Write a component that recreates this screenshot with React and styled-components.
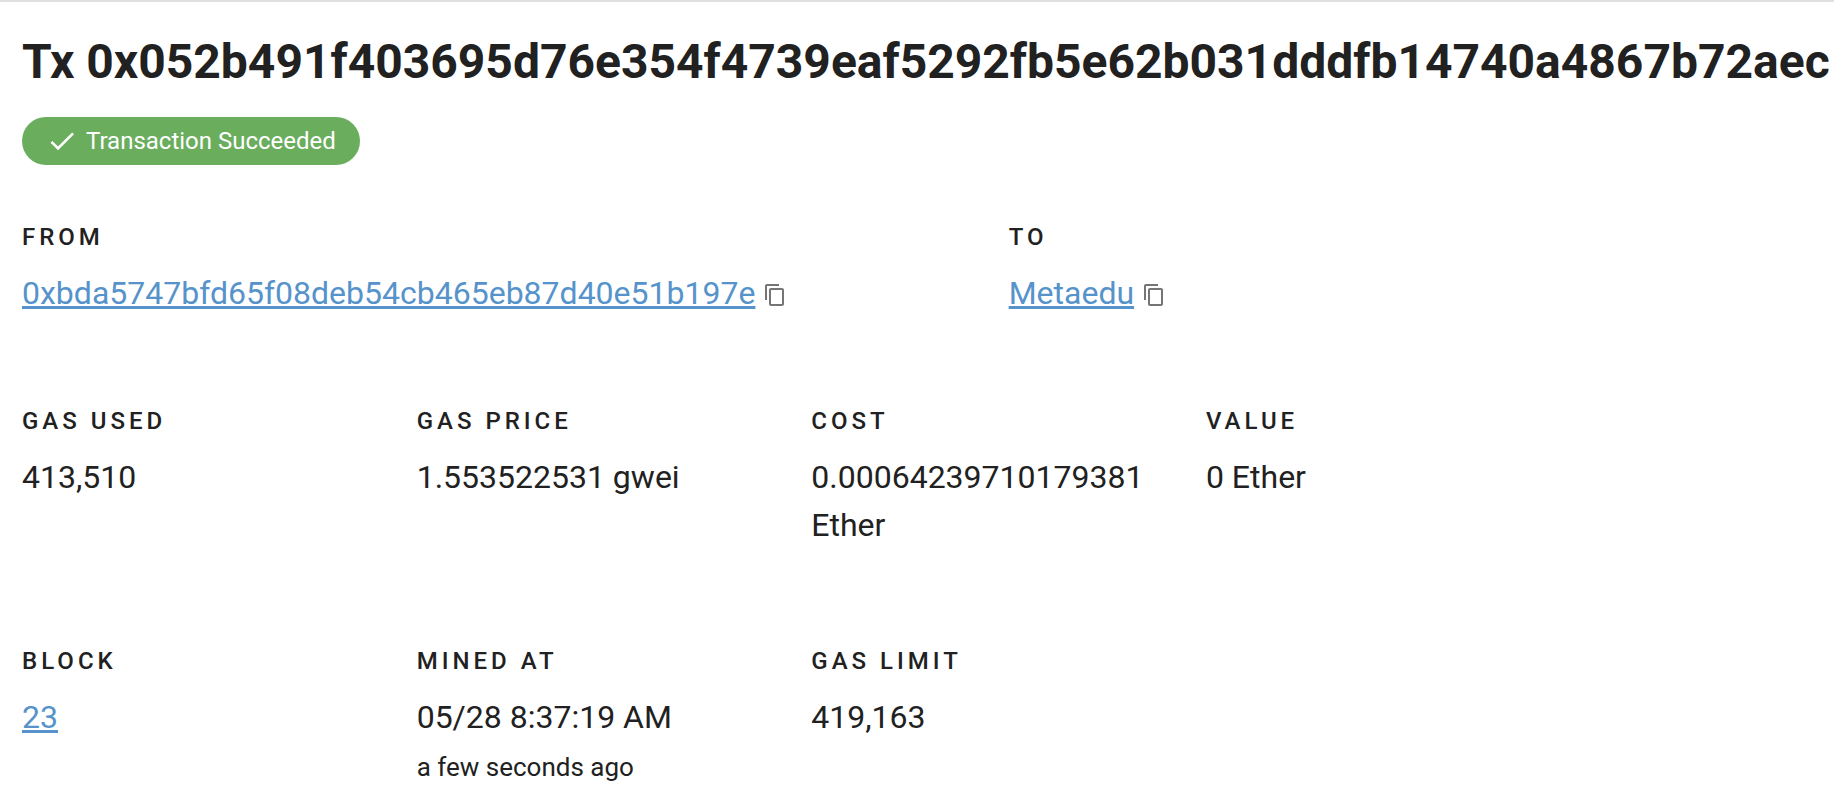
import React from "react";
import styled, { createGlobalStyle } from "styled-components";

const GlobalStyle = createGlobalStyle`
  *, *::before, *::after { box-sizing: border-box; }
  body {
    margin: 0;
    background: #fff;
    color: #212121;
    font-family: Roboto, "Liberation Sans", sans-serif;
    font-size: 32px;
    line-height: 48px;
  }
`;

const Page = styled.main`
  border-top: 2px solid #e0e0e0;
  padding: 32px 0 0 22px;
  overflow: hidden;
`;

const Title = styled.h1`
  margin: 0 0 27px;
  font-size: 48px;
  font-weight: 700;
  line-height: 56px;
  white-space: nowrap;
`;

const StatusChip = styled.div`
  display: inline-flex;
  align-items: center;
  gap: 8px;
  height: 48px;
  padding: 0 24px;
  border-radius: 24px;
  background: #69ad5d;
  color: #fff;
  font-size: 24px;
  vertical-align: top;
`;

const Icon = styled.svg`
  display: block;
  flex: none;
  width: ${(p) => p.$size}px;
  height: ${(p) => p.$size}px;
  fill: currentColor;
`;

const Details = styled.dl`
  display: flex;
  margin: ${(p) => p.$space}px 0 0;
`;

const Field = styled.div`
  flex: 0 0 ${(p) => (p.$wide ? "54.45%" : "21.78%")};
`;

const Label = styled.dt`
  margin-bottom: 16px;
  font-size: 24px;
  font-weight: 500;
  line-height: 32px;
  letter-spacing: 4px;
  text-transform: uppercase;
`;

const Value = styled.dd`
  margin: 0;
`;

const AddressLine = styled.div`
  display: flex;
  align-items: center;
  gap: 8px;
`;

const Link = styled.a`
  color: #5693cb;
  text-decoration: underline;
  text-decoration-thickness: 3px;
  text-decoration-skip-ink: none;
`;

const CopyButton = styled.button`
  padding: 4px 0 0;
  border: 0;
  background: none;
  color: #757575;
  cursor: pointer;
`;

const Note = styled.div`
  margin-top: 2px;
  font-size: 26px;
`;

function Address({ children }) {
  return (
    <AddressLine>
      <Link href="#address">{children}</Link>
      <CopyButton type="button" aria-label="Copy address">
        <Icon $size={24} viewBox="0 0 24 24" aria-hidden="true">
          <path d="M16 1H4c-1.1 0-2 .9-2 2v14h2V3h12V1zm3 4H8c-1.1 0-2 .9-2 2v14c0 1.1.9 2 2 2h11c1.1 0 2-.9 2-2V7c0-1.1-.9-2-2-2zm0 16H8V7h11v14z" />
        </Icon>
      </CopyButton>
    </AddressLine>
  );
}

function Detail({ label, wide, children }) {
  return (
    <Field $wide={wide}>
      <Label>{label}</Label>
      <Value>{children}</Value>
    </Field>
  );
}

export default function App() {
  return (
    <>
      <GlobalStyle />
      <Page>
        <Title>Tx 0x052b491f403695d76e354f4739eaf5292fb5e62b031dddfb14740a4867b72aec</Title>
        <StatusChip>
          <Icon $size={32} viewBox="0 0 24 24" aria-hidden="true">
            <path d="M9 16.2 4.8 12l-1.4 1.4L9 19 21 7l-1.4-1.4L9 16.2z" />
          </Icon>
          Transaction Succeeded
        </StatusChip>
        <Details $space={56}>
          <Detail label="From" wide>
            <Address>0xbda5747bfd65f08deb54cb465eb87d40e51b197e</Address>
          </Detail>
          <Detail label="To" wide>
            <Address>Metaedu</Address>
          </Detail>
        </Details>
        <Details $space={88}>
          <Detail label="Gas used">413,510</Detail>
          <Detail label="Gas price">1.553522531 gwei</Detail>
          <Detail label="Cost">0.00064239710179381 Ether</Detail>
          <Detail label="Value">0 Ether</Detail>
        </Details>
        <Details $space={96}>
          <Detail label="Block">
            <Link href="#block">23</Link>
          </Detail>
          <Detail label="Mined at">
            05/28 8:37:19 AM
            <Note>a few seconds ago</Note>
          </Detail>
          <Detail label="Gas limit">419,163</Detail>
        </Details>
      </Page>
    </>
  );
}
